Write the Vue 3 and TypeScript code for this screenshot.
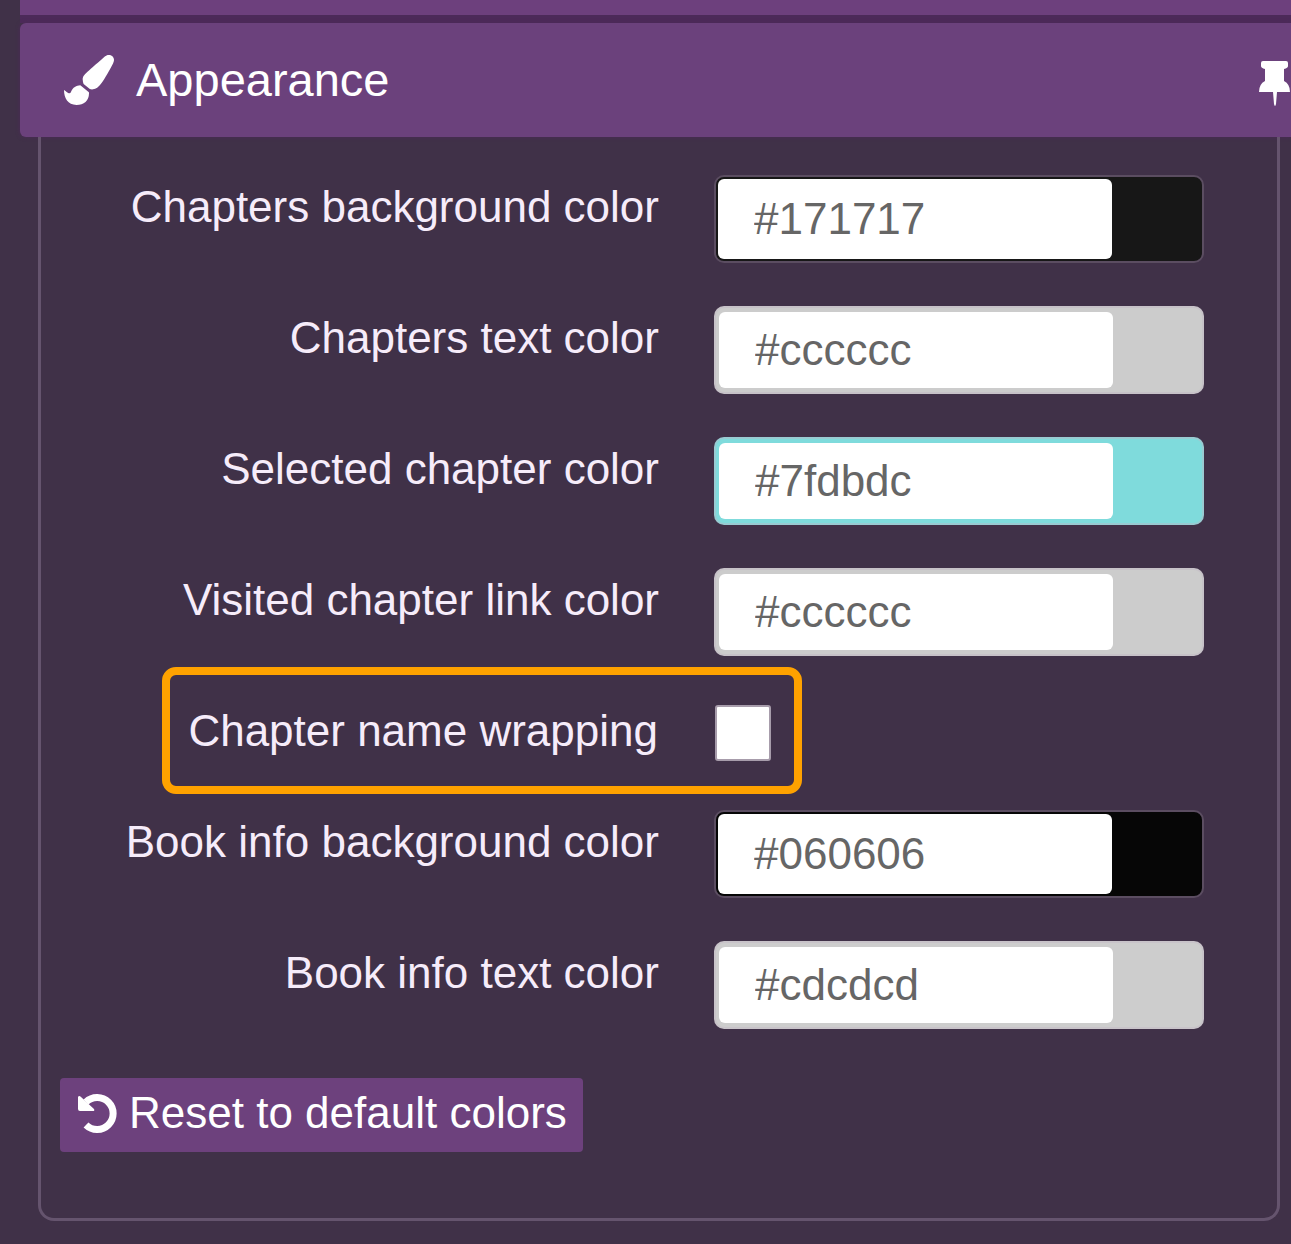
<script setup lang="ts">
import { ref } from 'vue'

interface ColorField {
  kind: 'color'
  id: string
  label: string
  value: string
}

interface CheckField {
  kind: 'check'
  id: string
  label: string
  checked: boolean
}

const fields = ref<(ColorField | CheckField)[]>([
  { kind: 'color', id: 'chapters-bg', label: 'Chapters background color', value: '#171717' },
  { kind: 'color', id: 'chapters-text', label: 'Chapters text color', value: '#cccccc' },
  { kind: 'color', id: 'selected-chapter', label: 'Selected chapter color', value: '#7fdbdc' },
  { kind: 'color', id: 'visited-chapter', label: 'Visited chapter link color', value: '#cccccc' },
  { kind: 'check', id: 'name-wrapping', label: 'Chapter name wrapping', checked: false },
  { kind: 'color', id: 'book-bg', label: 'Book info background color', value: '#060606' },
  { kind: 'color', id: 'book-text', label: 'Book info text color', value: '#cdcdcd' },
])

const defaults = fields.value.map((field) => ({ ...field }))

function resetColors() {
  fields.value = defaults.map((field) => ({ ...field }))
}

function isDark(color: string): boolean {
  return parseInt(color.slice(1, 3), 16) < 64
}
</script>

<template>
  <main class="settings">
    <div class="previous-section"></div>
    <header class="section-header">
      <svg class="brush" viewBox="0 0 512 512" aria-hidden="true">
        <path d="M167.02 309.34c-40.12 2.58-76.53 17.86-97.19 72.3-2.35 6.21-8 9.98-14.59 9.98-11.11 0-45.46-27.67-55.25-34.35C0 439.62 37.93 512 128 512c75.86 0 128-43.77 128-120.19 0-3.11-.65-6.08-.97-9.13l-88.01-73.34zM457.89 0c-15.16 0-29.37 6.71-40.21 16.45C213.27 199.05 192 203.34 192 257.09c0 13.7 3.25 26.76 8.73 38.7l63.82 53.18c7.21 1.8 14.64 3.03 22.39 3.03 62.11 0 98.11-45.47 211.16-256.46 7.38-14.35 13.9-29.85 13.9-45.99C512 20.64 486 0 457.89 0z" />
      </svg>
      <h2>Appearance</h2>
      <button class="pin" type="button" aria-label="Pin section">
        <svg viewBox="0 0 32 54" aria-hidden="true">
          <path d="M4 8h23q2 0 2 2v3q0 2-4 3v12q6 3 6 11H18l-1 12q-1 4-2 0l-1-12H0q0-8 6-11V16q-4-1-4-3v-3q0-2 2-2z" />
        </svg>
      </button>
    </header>
    <section class="section-body">
      <form class="fields" @submit.prevent>
        <div v-for="field in fields" :key="field.id" class="field" :class="field.kind">
          <label :for="field.id">{{ field.label }}</label>
          <div
            v-if="field.kind === 'color'"
            class="swatch"
            :class="{ dark: isDark(field.value) }"
            :style="{ backgroundColor: field.value }"
          >
            <input :id="field.id" v-model="field.value" type="text" spellcheck="false" />
          </div>
          <input v-else :id="field.id" v-model="field.checked" type="checkbox" />
        </div>
      </form>
      <button class="reset" type="button" @click="resetColors">
        <svg viewBox="0 0 39 39" aria-hidden="true">
          <path d="M8 8A16 16 0 1 1 8 31" fill="none" stroke="#fff" stroke-width="7" />
          <path d="M0 3q1-2 3 0l13 12q1 2-1 2H2q-2 0-2-2z" />
        </svg>
        <span>Reset to default colors</span>
      </button>
    </section>
  </main>
</template>

<style>
body {
  margin: 0;
  background: #403148;
}
</style>

<style scoped>
.settings {
  box-sizing: border-box;
  min-height: 100vh;
  padding: 0 0 24px 20px;
  background: #403148;
  color: #f6ecfa;
  font-family: "Liberation Sans", Arial, sans-serif;
  font-size: 44px;
  line-height: 52px;
}

svg {
  display: block;
  fill: #fff;
}

.previous-section {
  height: 15px;
  background: #6d407d;
  border-bottom: 8px solid #4c2a59;
}

.section-header {
  display: flex;
  align-items: center;
  box-sizing: border-box;
  height: 114px;
  padding-left: 44px;
  border-radius: 6px 0 0 6px;
  background: #6b417c;
  box-shadow: 0 0 4px #4c2a59;
}

.brush {
  width: 50px;
  height: 50px;
}

h2 {
  flex: 1;
  margin: 0 0 0 22px;
  color: #fff;
  font-size: 47px;
  font-weight: 400;
}

button {
  border: 0;
  color: #fff;
  font: inherit;
  cursor: pointer;
}

.pin {
  padding: 0;
  background: none;
}

.pin svg {
  width: 32px;
  height: 54px;
}

.section-body {
  box-sizing: border-box;
  margin: 0 11px 0 18px;
  padding: 38px 73px 66px 19px;
  border: 3px solid #65546e;
  border-top: 0;
  border-radius: 0 0 16px 16px;
}

.fields {
  display: flex;
  flex-direction: column;
  gap: 43px;
}

.field {
  display: flex;
  align-items: flex-start;
  justify-content: flex-end;
  gap: 55px;
}

label {
  padding-top: 6px;
  white-space: nowrap;
}

.swatch {
  box-sizing: border-box;
  width: 490px;
  height: 88px;
  padding: 4px 3px;
  border: 2px solid #c0b4c466;
  border-radius: 10px;
}

.swatch.dark {
  padding: 2px;
  border-color: #5b4d61;
}

.swatch input {
  display: block;
  box-sizing: border-box;
  width: 394px;
  height: 100%;
  padding: 0 36px;
  border: 0;
  border-radius: 6px;
  background: #fff;
  color: #666;
  font: inherit;
}

.check {
  position: relative;
  align-items: center;
  gap: 57px;
  height: 68px;
  padding-right: 433px;
}

.check label {
  padding: 0 0 4px;
}

.check::after {
  content: "";
  position: absolute;
  top: -32px;
  right: 402px;
  bottom: -27px;
  width: 624px;
  border: 8px solid #ffa200;
  border-radius: 14px;
  pointer-events: none;
}

.check input {
  width: 56px;
  height: 56px;
  margin: 0;
  border: 2px solid #a79cab;
  border-radius: 3px;
  background: #fff;
  appearance: none;
}

.reset {
  display: flex;
  align-items: center;
  gap: 12px;
  height: 74px;
  margin-top: 49px;
  padding: 0 16px 4px 18px;
  border-radius: 4px;
  background: #6d417d;
}

.reset svg {
  width: 39px;
  height: 39px;
}
</style>
